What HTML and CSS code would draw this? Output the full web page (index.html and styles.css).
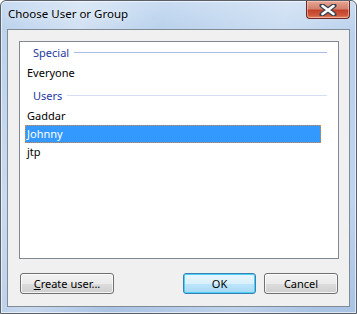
FILE: index.html
```html
<!DOCTYPE html>
<html>
<head>
<meta charset="utf-8">
<link rel="stylesheet" href="styles.css">
</head>
<body>
<div class="window">
  <div class="titlebar">
    <span class="title">Choose User or Group</span>
    <div class="close">
      <svg width="18" height="12" viewBox="0 0 18 12">
        <path d="M3 1.5 L15 10.5 M15 1.5 L3 10.5" stroke="#3a4450" stroke-width="5" stroke-linecap="round"/>
        <path d="M3.5 2 L14.5 10 M14.5 2 L3.5 10" stroke="#ffffff" stroke-width="2.6" stroke-linecap="round"/>
      </svg>
    </div>
  </div>
  <div class="client">
    <div class="listbox">
      <div class="group focused"><span class="gname">Special</span><span class="gline"></span></div>
      <div class="item">Everyone</div>
      <div class="group"><span class="gname">Users</span><span class="gline"></span></div>
      <div class="item">Gaddar</div>
      <div class="item selected">Johnny</div>
      <div class="item">jtp</div>
    </div>
    <div class="buttons">
      <button class="btn create"><u>C</u>reate user...</button>
      <div class="spacer"></div>
      <button class="btn ok default">OK</button>
      <button class="btn cancel">Cancel</button>
    </div>
  </div>
</div>
</body>
</html>
```
FILE: styles.css
```css
html, body {
  margin: 0;
  padding: 0;
  width: 357px;
  height: 314px;
  overflow: hidden;
  background: #ffffff;
}
body {
  font-family: "Segoe UI", "Noto Sans", "Open Sans", sans-serif;
  font-size: 11px;
  color: #000;
}
.window {
  box-sizing: border-box;
  width: 357px;
  height: 314px;
  border: 1px solid #5a6069;
  border-radius: 6px 6px 0 0;
  background:
    linear-gradient(100deg, rgba(255,255,255,0) 0%, rgba(255,255,255,0.35) 20%, rgba(255,255,255,0) 40%, rgba(255,255,255,0.25) 70%, rgba(255,255,255,0) 90%),
    linear-gradient(180deg, #c9dcf2 0px, #b9d1ec 30px, #bfd4ee 200px, #a9c3e4 314px);
  display: flex;
  flex-direction: column;
  box-shadow: inset 0 0 0 1px rgba(255,255,255,0.6);
}
.titlebar {
  height: 28px;
  display: flex;
  align-items: flex-start;
  justify-content: space-between;
  padding-left: 7px;
}
.title {
  margin-top: 5px;
  font-size: 11.5px;
  color: #000;
  text-shadow: 0 0 6px rgba(255,255,255,0.9);
}
.close {
  width: 44px;
  height: 18px;
  margin-right: 6px;
  box-sizing: border-box;
  border: 1px solid #6e2a22;
  border-top: none;
  border-radius: 0 0 4px 4px;
  background: linear-gradient(180deg, #e8a594 0%, #d2826e 45%, #c4422a 55%, #cf5a3d 85%, #e48a6a 100%);
  box-shadow: inset 0 0 0 1px rgba(255,220,210,0.5);
  display: flex;
  align-items: center;
  justify-content: center;
}
.close svg { display: block; }
.client {
  box-sizing: border-box;
  margin: 0 6px 6px 6px;
  flex: 1;
  background: #f0f0f0;
  border: 1px solid #818b96;
  padding: 11px 10px 12px 11px;
  display: flex;
  flex-direction: column;
}
.listbox {
  box-sizing: border-box;
  width: 320px;
  height: 218px;
  background: #ffffff;
  border: 1px solid #828790;
  padding: 1px 11px 0 5px;
}
.group {
  display: flex;
  align-items: center;
  height: 18px;
  padding-left: 8px;
}
.gname {
  color: #1e3a9c;
  margin-right: 5px;
}
.gline {
  flex: 1;
  height: 1px;
  background: #d4dff1;
}
.group.focused .gline {
  background: #a8bbe4;
}
.group + .item { margin-top: 3px; }
.item + .group { margin-top: 4px; }
.item {
  height: 18px;
  line-height: 17px;
  padding-left: 2px;
  margin-right: 6px;
  box-sizing: border-box;
}
.item.selected {
  background: #3399ff;
  color: #ffffff;
  outline: 1px dotted #e0873a;
  outline-offset: -1px;
}
.buttons {
  display: flex;
  margin-top: 14px;
  gap: 8px;
}
.spacer { flex: 1; }
.btn {
  box-sizing: border-box;
  height: 21px;
  font-family: "Segoe UI", "Noto Sans", "Open Sans", sans-serif;
  font-size: 11px;
  color: #000;
  border: 1px solid #707070;
  border-radius: 3px;
  background: linear-gradient(180deg, #f2f2f2 0%, #ebebeb 50%, #dddddd 51%, #cfcfcf 100%);
  box-shadow: inset 0 0 0 1px rgba(255,255,255,0.75);
  padding: 0;
  line-height: 18px;
}
.btn u { text-decoration: underline; }
.create { width: 94px; margin-left: 1px; }
.ok { width: 73px; }
.cancel { width: 74px; margin-right: 1px; }
.btn.default {
  border-color: #3c7fb1;
  background: linear-gradient(180deg, #eaf6fd 0%, #d9f0fc 50%, #bee6fd 51%, #a7d9f5 100%);
  box-shadow: inset 0 0 0 1px #48d0f8;
}
```
